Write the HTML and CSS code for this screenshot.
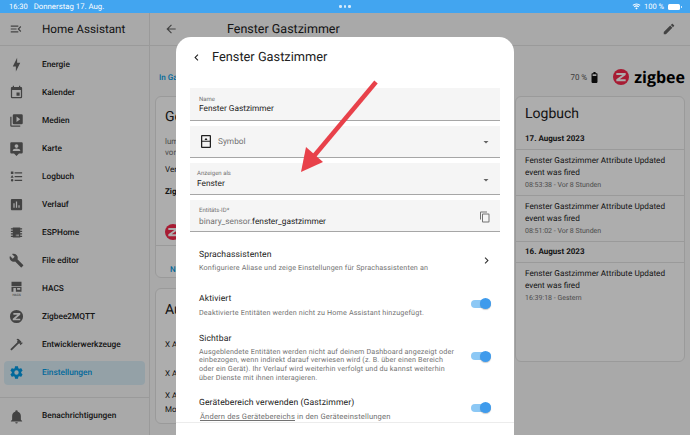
FILE: index.html
```html
<!DOCTYPE html>
<html lang="de">
<head>
    <meta charset="UTF-8">
    <meta name="viewport" content="width=device-width, initial-scale=1.0">
    <title>Fenster Gastzimmer</title>
    <link rel="stylesheet" href="styles.css">
</head>
<body>
    <div class="status-bar">
        <div class="status-left"><span>16:30</span><span class="status-date">Donnerstag 17. Aug.</span></div>
        <div class="status-dots"><i></i><i></i><i></i></div>
        <div class="status-right">
            <svg class="wifi" viewBox="0 0 24 24"><path d="M12 20l-3.2-3.6a4.6 4.6 0 0 1 6.4 0zM6.9 14.2L5 12a10.400 10.400 0 0 1 14 0l-1.900 2.200a7.500 7.500 0 0 0-10.200 0zM3.300 10.200L1.400 8a16 16 0 0 1 21.200 0l-1.900 2.200a13.200 13.200 0 0 0-17.400 0z"/></svg>
            <span>100 %</span>
            <span class="batt"></span>
        </div>
    </div>

    <div class="app">
        <aside class="sidebar">
            <div class="side-head">
                <svg class="icon" viewBox="0 0 24 24"><path d="M21,15.61L19.59,17L14.58,12L19.59,7L21,8.39L17.44,12L21,15.61M3,6H16V8H3V6M3,13V11H13V13H3M3,18V16H16V18H3Z"/></svg>
                <span class="brand">Home Assistant</span>
            </div>
            <nav class="nav">
                <a class="nav-item"><svg class="icon" viewBox="0 0 24 24"><path d="M11 15H6L13 1V9H18L11 23V15Z"/></svg>Energie</a>
                <a class="nav-item"><svg class="icon" viewBox="0 0 24 24"><path d="M19,19H5V8H19M16,1V3H8V1H6V3H5C3.89,3 3,3.89 3,5V19A2,2 0 0,0 5,21H19A2,2 0 0,0 21,19V5C21,3.89 20.1,3 19,3H18V1M17,12H12V17H17V12Z"/></svg>Kalender</a>
                <a class="nav-item"><svg class="icon" viewBox="0 0 24 24"><path d="M4,6H2V20A2,2 0 0,0 4,22H18V20H4V6M20,2H8A2,2 0 0,0 6,4V16A2,2 0 0,0 8,18H20A2,2 0 0,0 22,16V4A2,2 0 0,0 20,2M12,14.5V5.5L18,10L12,14.5Z"/></svg>Medien</a>
                <a class="nav-item"><svg class="icon" viewBox="0 0 24 24"><path d="M20 2H4C2.900 2 2 2.900 2 4V18C2 19.100 2.900 20 4 20H8L12 24L16 20H20C21.100 20 22 19.100 22 18V4C22 2.900 21.100 2 20 2M12 5C13.660 5 15 6.340 15 8S13.660 11 12 11 9 9.660 9 8 10.340 5 12 5M18 16H6V15C6 13 10 11.900 12 11.900S18 13 18 15V16Z"/></svg>Karte</a>
                <a class="nav-item"><svg class="icon" viewBox="0 0 24 24"><path d="M5,9.5L7.5,14H2.500L5,9.500M3,4H7V8H3V4M5,20A2,2 0 0,0 7,18A2,2 0 0,0 5,16A2,2 0 0,0 3,18A2,2 0 0,0 5,20M9,5V7H21V5H9M9,19H21V17H9V19M9,13H21V11H9V13Z"/></svg>Logbuch</a>
                <a class="nav-item"><svg class="icon" viewBox="0 0 24 24"><path d="M19 3H5C3.900 3 3 3.900 3 5V19C3 20.100 3.900 21 5 21H19C20.100 21 21 20.100 21 19V5C21 3.900 20.100 3 19 3M9 17H7V10H9V17M13 17H11V7H13V17M17 17H15V13H17V17Z"/></svg>Verlauf</a>
                <a class="nav-item"><svg class="icon" viewBox="0 0 24 24"><path d="M6,4H18V5H21V7H18V9H21V11H18V13H21V15H18V17H21V19H18V20H6V19H3V17H6V15H3V13H6V11H3V9H6V7H3V5H6V4M11,15V18H12V15H11M13,15V18H14V15H13M15,15V18H16V15H15Z"/></svg>ESPHome</a>
                <a class="nav-item"><svg class="icon" viewBox="0 0 24 24"><path d="M22.700,19L13.600,9.900C14.500,7.600 14,4.900 12.100,3C10.100,1 7.100,0.600 4.700,1.700L9,6L6,9L1.600,4.700C0.400,7.100 0.900,10.100 2.900,12.100C4.800,14 7.500,14.500 9.800,13.600L18.900,22.700C19.300,23.100 19.900,23.100 20.300,22.700L22.600,20.400C23.100,20 23.100,19.300 22.700,19Z"/></svg>File editor</a>
                <a class="nav-item">
                    <svg class="icon" viewBox="0 0 24 24"><path d="M4 1H20V8H4ZM4 9H20V17H4ZM7 11V17H11V11ZM13 11V14H18V11Z"/><text x="12" y="23.500" class="hacs-label">HACS</text></svg>HACS</a>
                <a class="nav-item"><svg class="icon" viewBox="0 0 24 24"><path d="M12 1.500A10.500 10.500 0 1 0 12 22.500A10.500 10.500 0 1 0 12 1.500ZM7 6.500H18V9L10.500 15.500H18V18H6V15.500L13.500 9H7Z"/></svg>Zigbee2MQTT</a>
                <a class="nav-item"><svg class="icon" viewBox="0 0 24 24"><path d="M2 19.630L13.430 8.200L12.720 7.500L14.140 6.070L12 3.890C13.200 2.700 15.090 2.700 16.270 3.890L19.870 7.500L18.450 8.910H21.290L22 9.620L18.450 13.210L17.740 12.500V9.620L16.270 11.040L15.560 10.330L4.130 21.760L2 19.630Z"/></svg>Entwicklerwerkzeuge</a>
                <a class="nav-item active"><svg class="icon" viewBox="0 0 24 24"><path d="M12,15.500A3.500,3.500 0 0,1 8.500,12A3.500,3.500 0 0,1 12,8.500A3.500,3.500 0 0,1 15.500,12A3.500,3.500 0 0,1 12,15.500M19.430,12.970C19.470,12.650 19.500,12.330 19.500,12C19.500,11.670 19.470,11.340 19.430,11L21.540,9.370C21.730,9.220 21.780,8.950 21.660,8.730L19.660,5.270C19.540,5.050 19.270,4.960 19.050,5.050L16.560,6.050C16.040,5.660 15.500,5.320 14.870,5.070L14.500,2.420C14.460,2.180 14.250,2 14,2H10C9.750,2 9.540,2.180 9.500,2.420L9.130,5.070C8.500,5.320 7.960,5.660 7.440,6.050L4.950,5.050C4.730,4.960 4.460,5.050 4.340,5.270L2.340,8.730C2.210,8.950 2.270,9.220 2.460,9.370L4.570,11C4.530,11.340 4.500,11.670 4.500,12C4.500,12.330 4.530,12.650 4.570,12.970L2.460,14.630C2.270,14.780 2.210,15.050 2.340,15.270L4.340,18.730C4.460,18.950 4.730,19.030 4.950,18.950L7.440,17.940C7.960,18.340 8.500,18.680 9.130,18.930L9.500,21.580C9.540,21.820 9.750,22 10,22H14C14.250,22 14.460,21.820 14.500,21.580L14.870,18.930C15.500,18.670 16.040,18.340 16.560,17.940L19.050,18.950C19.270,19.030 19.540,18.950 19.660,18.730L21.660,15.270C21.780,15.050 21.730,14.780 21.540,14.630L19.430,12.970Z"/></svg>Einstellungen</a>
            </nav>
            <div class="nav-bottom">
                <a class="nav-item"><svg class="icon" viewBox="0 0 24 24"><path d="M21,19V20H3V19L5,17V11C5,7.900 7.030,5.170 10,4.290C10,4.190 10,4.100 10,4A2,2 0 0,1 12,2A2,2 0 0,1 14,4C14,4.100 14,4.190 14,4.290C16.970,5.170 19,7.900 19,11V17L21,19M14,21A2,2 0 0,1 12,23A2,2 0 0,1 10,21"/></svg>Benachrichtigungen</a>
            </div>
        </aside>

        <main class="main">
            <header class="top-bar">
                <svg class="icon back" viewBox="0 0 24 24"><path d="M20,11V13H8L13.500,18.500L12.080,19.920L4.160,12L12.080,4.080L13.500,5.500L8,11H20Z"/></svg>
                <span class="top-title">Fenster Gastzimmer</span>
                <svg class="icon edit" viewBox="0 0 24 24"><path d="M20.710,7.040C21.100,6.650 21.100,6 20.710,5.630L18.370,3.290C18,2.900 17.350,2.900 16.960,3.290L15.120,5.120L18.870,8.870M3,17.250V21H6.750L17.810,9.930L14.060,6.180L3,17.250Z"/></svg>
            </header>
            <div class="info-row">
                <a class="link">In Gastzimmer</a>
                <div class="info-right">
                    <span class="pct">70 %</span>
                    <svg class="icon batt-icon" viewBox="0 0 24 24"><path d="M16 4H14V2H10V4H8A1.500 1.500 0 0 0 6.500 5.500V20.500A1.500 1.500 0 0 0 8 22H16A1.500 1.500 0 0 0 17.500 20.500V5.500A1.500 1.500 0 0 0 16 4ZM8.500 6H15.500V9H8.500Z" fill-rule="evenodd"/></svg>
                    <svg class="zig-logo" viewBox="0 0 24 24"><circle cx="12" cy="12" r="12"/><path d="M5 6H19V9L10 15.500H19V18.500H5V15.500L14 9H5Z"/></svg>
                    <span class="zig-word">zigbee</span>
                </div>
            </div>
            <div class="columns">
                <div class="col-left">
                    <section class="card card-device">
                        <h2>Gerät</h2>
                        <p class="muted">lumi</p>
                        <p class="muted">von</p>
                        <p class="dev-ver">Ver</p>
                        <p class="dev-zig">Zig</p>
                        <svg class="zig-logo dev-logo" viewBox="0 0 24 24"><circle cx="12" cy="12" r="12"/><path d="M5 6H19V9L10 15.500H19V18.500H5V15.500L14 9H5Z"/></svg>
                        <div class="card-foot"><a class="link">Name</a></div>
                    </section>
                    <section class="card card-auto">
                        <h2>Auto</h2>
                        <p class="auto-a">X Au</p>
                        <p class="auto-b">X Au</p>
                        <p class="auto-c">X Au</p>
                        <p class="auto-d">Mo</p>
                    </section>
                </div>
                <section class="card card-log">
                    <h2>Logbuch</h2>
                    <h3>17. August 2023</h3>
                    <div class="log-entry">
                        <p>Fenster Gastzimmer Attribute Updated event was fired</p>
                        <small>08:53:38 - Vor 8 Stunden</small>
                    </div>
                    <div class="log-entry">
                        <p>Fenster Gastzimmer Attribute Updated event was fired</p>
                        <small>08:51:02 - Vor 8 Stunden</small>
                    </div>
                    <h3>16. August 2023</h3>
                    <div class="log-entry">
                        <p>Fenster Gastzimmer Attribute Updated event was fired</p>
                        <small>16:39:18 - Gestern</small>
                    </div>
                </section>
            </div>
        </main>
    </div>

    <div class="scrim"></div>

    <div class="dialog">
        <div class="dialog-head">
            <svg class="icon" viewBox="0 0 24 24"><path d="M15.410,16.580L10.830,12L15.410,7.410L14,6L8,12L14,18L15.410,16.580Z"/></svg>
            <span>Fenster Gastzimmer</span>
        </div>
        <div class="dialog-body">
            <div class="field field-name">
                <label>Name</label>
                <div class="value">Fenster Gastzimmer</div>
            </div>
            <div class="field field-row">
                <svg class="icon sym" viewBox="0 0 20 26"><path d="M2 0H18A2 2 0 0 1 20 2V24A2 2 0 0 1 18 26H2A2 2 0 0 1 0 24V2A2 2 0 0 1 2 0ZM2.500 2.500V11.500H17.500V2.500ZM2.500 13.500V23.500H17.500V13.500ZM10 5.500L13 10H7Z" fill-rule="evenodd"/></svg>
                <span class="placeholder">Symbol</span>
                <svg class="icon caret" viewBox="0 0 24 24"><path d="M7,10L12,15L17,10H7Z"/></svg>
            </div>
            <div class="field field-row select">
                <div>
                    <label>Anzeigen als</label>
                    <div class="value">Fenster</div>
                </div>
                <svg class="icon caret" viewBox="0 0 24 24"><path d="M7,10L12,15L17,10H7Z"/></svg>
            </div>
            <div class="field field-row field-id">
                <div>
                    <label>Entitäts-ID*</label>
                    <div class="value"><span class="prefix">binary_sensor.</span>fenster_gastzimmer</div>
                </div>
                <svg class="icon copy" viewBox="0 0 24 24"><path d="M19,21H8V7H19M19,5H8A2,2 0 0,0 6,7V21A2,2 0 0,0 8,23H19A2,2 0 0,0 21,21V7A2,2 0 0,0 19,5M16,1H4A2,2 0 0,0 2,3V17H4V3H16V1Z"/></svg>
            </div>

            <div class="row row-voice">
                <div class="row-text">
                    <h4>Sprachassistenten</h4>
                    <p>Konfiguriere Aliase und zeige Einstellungen für Sprachassistenten an</p>
                </div>
                <svg class="icon chevron" viewBox="0 0 24 24"><path d="M8.590,16.580L13.170,12L8.590,7.410L10,6L16,12L10,18L8.590,16.580Z"/></svg>
            </div>
            <div class="row row-enabled">
                <div class="row-text">
                    <h4>Aktiviert</h4>
                    <p>Deaktivierte Entitäten werden nicht zu Home Assistant hinzugefügt.</p>
                </div>
                <span class="toggle"></span>
            </div>
            <div class="row row-visible">
                <div class="row-text">
                    <h4>Sichtbar</h4>
                    <p>Ausgeblendete Entitäten werden nicht auf deinem Dashboard angezeigt oder einbezogen, wenn indirekt darauf verwiesen wird (z. B. über einen Bereich oder ein Gerät). Ihr Verlauf wird weiterhin verfolgt und du kannst weiterhin über Dienste mit ihnen interagieren.</p>
                </div>
                <span class="toggle"></span>
            </div>
            <div class="row row-area">
                <div class="row-text">
                    <h4>Gerätebereich verwenden (Gastzimmer)</h4>
                    <p><u>Ändern des Gerätebereichs</u> in den Geräteeinstellungen</p>
                </div>
                <span class="toggle"></span>
            </div>
        </div>
        <div class="dialog-foot"></div>
    </div>

    <svg class="arrow" viewBox="0 0 100 100"><path d="M76 2L14 76" stroke="#e8414a" stroke-width="4.500" fill="none"/><path d="M1 92L6 67L23 82Z" fill="#e8414a"/></svg>
</body>
</html>
```

FILE: styles.css
```css
* {
    box-sizing: border-box;
}
html, body {
    height: 100%;
}
body {
    margin: 0;
    width: 690px;
    height: 435px;
    overflow: hidden;
    position: relative;
    display: flex;
    flex-direction: column;
    background: #fafafa;
    color: #212121;
    font-family: Roboto, 'Liberation Sans', sans-serif;
    text-rendering: geometricPrecision;
}
h2, h3, h4, p {
    margin: 0;
    font-weight: 400;
}
.icon {
    width: 14px;
    height: 14px;
    flex: none;
    fill: #636363;
}

/* status bar */
.status-bar {
    height: 13px;
    flex: none;
    display: grid;
    grid-template-columns: 1fr auto 1fr;
    align-items: center;
    padding: 0 9px;
    background: #42a5f0;
    color: #fff;
    font-size: 7.500px;
    position: relative;
    z-index: 5;
}
.status-left {
    display: flex;
    gap: 6px;
}
.status-date {
    font-size: 7.800px;
}
.status-dots {
    display: flex;
    gap: 2px;
}
.status-dots i {
    width: 2.500px;
    height: 2.500px;
    border-radius: 50%;
    background: #d5ebfc;
}
.status-right {
    display: flex;
    justify-content: flex-end;
    align-items: center;
    gap: 3px;
}
.wifi {
    width: 9px;
    height: 9px;
    fill: #fff;
}
.batt {
    position: relative;
    width: 12px;
    height: 6px;
    margin: 0 1px 0 1px;
    border-radius: 1.500px;
    background: #fff;
}
.batt::after {
    content: '';
    position: absolute;
    right: -2px;
    top: 2px;
    width: 1px;
    height: 2px;
    background: #cfe7fb;
}

/* layout */
.app {
    flex: 1;
    display: flex;
    min-height: 0;
}
.sidebar {
    width: 150px;
    flex: none;
    border-right: 1px solid #e3e3e3;
    overflow: hidden;
}
.side-head {
    height: 33px;
    display: flex;
    align-items: center;
    gap: 19px;
    padding-left: 9px;
    border-bottom: 1px solid #e3e3e3;
}
.brand {
    font-size: 11.700px;
}
.nav {
    padding: 4.500px 4px 10px;
    border-bottom: 1px solid #e3e3e3;
}
.nav-item {
    height: 28px;
    display: flex;
    align-items: center;
    gap: 18px;
    padding-left: 5px;
    border-radius: 4px;
    font-size: 8.300px;
    font-weight: 500;
}
.nav-item .icon {
    width: 15px;
    height: 15px;
}
.nav-item.active {
    height: 24px;
    margin: 2px 0;
    background: rgba(3, 155, 229, .12);
    color: #039be5;
}
.nav-item.active .icon {
    fill: #039be5;
}
.nav-bottom {
    padding: 4.500px 4px 0;
}
.hacs-label {
    font-size: 5px;
    text-anchor: middle;
}

/* page behind the dialog */
.main {
    flex: 1;
    min-width: 0;
}
.top-bar {
    height: 33px;
    display: flex;
    align-items: center;
    padding: 0 14px 0 14px;
    border-bottom: 1px solid #e3e3e3;
    background: #fafafa;
}
.top-title {
    margin-left: 49px;
    font-size: 12.500px;
    flex: 1;
}
.info-row {
    height: 50px;
    display: flex;
    justify-content: space-between;
    align-items: center;
    padding: 12px 5px 0 9px;
}
.link {
    font-size: 8px;
    font-weight: 500;
    color: #039be5;
}
.info-right {
    display: flex;
    align-items: center;
}
.pct {
    font-size: 8px;
    color: #555;
}
.batt-icon {
    width: 13px;
    height: 13px;
    margin: 0 12px 0 1px;
    fill: #111;
}
.zig-logo {
    width: 16px;
    height: 16px;
    margin-right: 5px;
    fill: #f62a4c;
}
.zig-logo path {
    fill: #fff;
}
.zig-word {
    font-family: 'Open Sans', sans-serif;
    font-size: 16px;
    font-weight: 700;
    color: #000;
}
.columns {
    display: flex;
    gap: 6px;
    padding: 0 5px;
}
.col-left {
    flex: 1;
    display: flex;
    flex-direction: column;
    gap: 10px;
}
.card {
    border: 1px solid #e3e3e3;
    border-radius: 6px;
    background: #fff;
}
.card h2 {
    font-size: 14px;
}
.card-device {
    height: 182px;
    padding: 12px 9px 0;
    display: flex;
    flex-direction: column;
}
.muted {
    font-size: 8px;
    line-height: 11px;
    color: #727272;
}
.card-device h2 {
    margin-bottom: 11px;
}
.dev-ver, .dev-zig, .auto-a, .auto-b, .auto-c, .auto-d {
    font-size: 8px;
    line-height: 11px;
}
.dev-ver {
    margin-top: 6px;
}
.dev-zig {
    margin-top: 11px;
    font-weight: 700;
}
.dev-logo {
    flex: none;
    margin-top: 27px;
}
.card-foot {
    margin: 5px -9px 0;
    padding: 11px 14px 0;
    border-top: 1px solid #e3e3e3;
}
.card-auto {
    height: 136px;
    padding: 13px 9px 0;
}
.auto-a {
    margin-top: 21px;
}
.auto-b {
    margin-top: 18px;
}
.auto-c {
    margin-top: 11px;
}
.auto-d {
    margin-top: 3px;
}
.card-log {
    width: 170px;
    flex: none;
    height: 266px;
}
.card-log h2 {
    padding: 9px 9px 6px;
    font-size: 14px;
    line-height: 17px;
}
.card-log h3 {
    height: 21px;
    padding: 4px 9px 0;
    font-size: 8px;
    font-weight: 700;
    line-height: 12px;
    border-bottom: 1px solid #e3e3e3;
}
.log-entry {
    padding: 5px 9px 5px;
    border-bottom: 1px solid #e3e3e3;
    height: 46px;
}
.log-entry:last-child {
    border-bottom: none;
}
.log-entry p {
    font-size: 8.200px;
    line-height: 12.300px;
}
.log-entry small {
    display: block;
    font-size: 7px;
    line-height: 11px;
    color: #727272;
}

/* scrim + dialog */
.scrim {
    position: absolute;
    left: 0;
    right: 0;
    top: 13px;
    bottom: 0;
    background: rgba(0, 0, 0, .32);
}
.dialog {
    position: absolute;
    left: 176px;
    top: 37px;
    width: 338px;
    height: 398px;
    border-radius: 15px 15px 0 0;
    background: #fff;
    display: flex;
    flex-direction: column;
    overflow: hidden;
}
.dialog-head {
    height: 51px;
    flex: none;
    display: flex;
    align-items: center;
    gap: 9px;
    padding: 0 0 11px 14px;
    font-size: 12.800px;
}
.dialog-head .icon {
    width: 13px;
    height: 13px;
    fill: #212121;
}
.dialog-body {
    flex: 1;
    min-height: 0;
    overflow: hidden;
    padding: 0 14px;
}
.field {
    height: 32px;
    margin-bottom: 5px;
    padding: 7px 9px 0;
    background: #f5f5f5;
    border-bottom: 1px solid #a6a6a6;
}
.field-name {
    height: 33px;
    padding-top: 8px;
}
.field label {
    display: block;
    font-size: 6px;
    line-height: 7px;
    color: #727272;
}
.field .value {
    font-size: 8.300px;
    line-height: 12px;
}
.field-row {
    display: flex;
    align-items: center;
    justify-content: space-between;
    padding: 0 9px;
}
.field-row.select {
    padding: 2px 9px 0 7px;
}
.select .value {
    margin-top: 1px;
}
.field-id {
    padding-top: 3px;
}
.field-id .value {
    margin-top: 2px;
}
.sym {
    width: 10px;
    height: 13px;
    margin: 0 7px 0 2px;
    fill: #212121;
}
.placeholder {
    flex: 1;
    font-size: 8.300px;
    color: #727272;
}
.caret {
    width: 12px;
    height: 12px;
    margin-right: -1px;
    fill: #636363;
}
.copy {
    width: 12px;
    height: 12px;
    fill: #727272;
}
.prefix {
    color: #727272;
}
.row {
    display: flex;
    align-items: center;
    justify-content: space-between;
    gap: 14px;
    padding: 0 9px;
}
.row-text {
    flex: 1;
}
.row h4 {
    font-size: 8.600px;
    line-height: 12px;
    letter-spacing: .1px;
}
.row p {
    font-size: 7.200px;
    line-height: 8.800px;
    letter-spacing: .15px;
    color: #727272;
    margin-top: 3px;
}
.row-voice {
    margin-top: 17px;
}
.row-enabled {
    margin-top: 20px;
}
.row-enabled p {
    margin-top: 4px;
}
.row-visible {
    margin-top: 15px;
}
.row-area {
    margin-top: 14px;
}
.row-area p {
    margin-top: 4px;
    padding-left: 1px;
    font-size: 7.600px;
}
.chevron {
    width: 13px;
    height: 13px;
    margin-right: -2px;
    fill: #333;
}
.toggle {
    position: relative;
    width: 20px;
    height: 8px;
    flex: none;
    margin-bottom: 3px;
    border-radius: 4px;
    background: #8cc8f5;
}
.toggle::after {
    content: '';
    position: absolute;
    right: 0;
    top: -1.500px;
    width: 11px;
    height: 11px;
    border-radius: 50%;
    background: #3f9bec;
    box-shadow: 0 1px 1px rgba(0, 0, 0, .2);
}
.dialog-foot {
    height: 13px;
    flex: none;
    border-top: 1px solid #ececec;
}
.arrow {
    position: absolute;
    left: 300px;
    top: 80px;
    width: 100px;
    height: 100px;
}
```
